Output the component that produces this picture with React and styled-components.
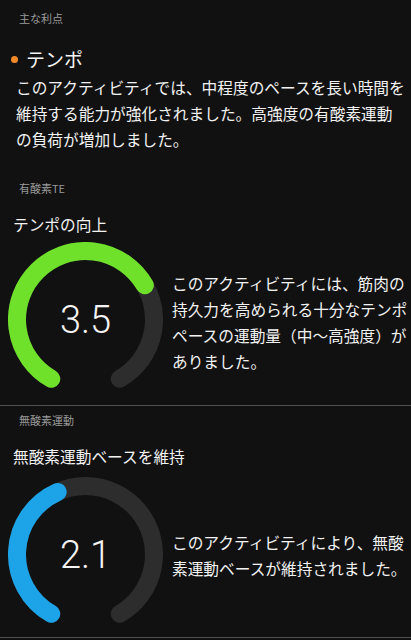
import styled, { createGlobalStyle } from 'styled-components';

const GlobalStyle = createGlobalStyle`
  html, body {
    margin: 0;
    padding: 0;
    background: #111111;
  }
  body {
    font-family: "Noto Sans CJK JP", "Noto Sans", sans-serif;
    color: #f2f2f2;
  }
`;

const polar = (cx, cy, r, deg) => {
  const a = (deg * Math.PI) / 180;
  return [cx + r * Math.sin(a), cy - r * Math.cos(a)];
};

const arcPath = (cx, cy, r, from, to) => {
  const [x1, y1] = polar(cx, cy, r, from);
  const [x2, y2] = polar(cx, cy, r, to);
  const large = to - from > 180 ? 1 : 0;
  return `M ${x1} ${y1} A ${r} ${r} 0 ${large} 1 ${x2} ${y2}`;
};

const Gauge = ({ value, color }) => {
  const size = 155;
  const c = size / 2;
  const r = 68.5;
  const start = 210;
  const sweep = 300;
  const end = start + (sweep * value) / 5;
  return (
    <GaugeBox>
      <svg width={size} height={size} viewBox={`0 0 ${size} ${size}`}>
        <path
          d={arcPath(c, c, r, start, start + sweep)}
          stroke="#2d2d2d"
          strokeWidth="18"
          strokeLinecap="round"
          fill="none"
        />
        <path
          d={arcPath(c, c, r, start, end)}
          stroke={color}
          strokeWidth="18"
          strokeLinecap="round"
          fill="none"
        />
      </svg>
      <GaugeValue>{value.toFixed(1)}</GaugeValue>
    </GaugeBox>
  );
};

const App = () => {
  return (
    <Page>
      <GlobalStyle />
      <Section $pad="10px 0 27px">
        <Label>主な利点</Label>
        <Headline>
          <Dot />
          テンポ
        </Headline>
        <Body>
          このアクティビティでは、中程度のペースを長い時間を
          <br />
          維持する能力が強化されました。高強度の有酸素運動
          <br />
          の負荷が増加しました。
        </Body>
      </Section>

      <Section $pad="0 0 8px" $divider>
        <Label>有酸素TE</Label>
        <Title>テンポの向上</Title>
        <GaugeRow $top="4px">
          <Gauge value={3.5} color="#6fe12b" />
          <Description $shift="6px">
            このアクティビティには、筋肉の
            <br />
            持久力を高められる十分なテンポ
            <br />
            ペースの運動量（中～高強度）が
            <br />
            ありました。
          </Description>
        </GaugeRow>
      </Section>

      <Section $pad="6px 0 5px" $divider>
        <Label>無酸素運動</Label>
        <Title>無酸素運動ベースを維持</Title>
        <GaugeRow $top="7px">
          <Gauge value={2.1} color="#1da4e8" />
          <Description $shift="3px">
            このアクティビティにより、無酸
            <br />
            素運動ベースが維持されました。
          </Description>
        </GaugeRow>
      </Section>
    </Page>
  );
};

export default App;

const Page = styled.div`
  width: 411px;
  min-height: 640px;
  background: #111111;
  overflow: hidden;
`;

const Section = styled.section`
  padding: ${(p) => p.$pad};
  border-bottom: ${(p) => (p.$divider ? '1px solid #505050' : 'none')};
`;

const Label = styled.div`
  padding-left: 19px;
  font-size: 11px;
  line-height: 16px;
  color: #9a9a9a;
`;

const Headline = styled.div`
  display: flex;
  align-items: center;
  margin-top: 20px;
  padding-left: 11px;
  font-size: 19px;
  line-height: 26px;
  color: #f4f4f4;
`;

const Dot = styled.span`
  width: 7px;
  height: 7px;
  border-radius: 50%;
  background: #f28a2a;
  margin-right: 8px;
`;

const Body = styled.p`
  margin: 3px 0 0;
  padding-left: 16px;
  font-size: 15.7px;
  line-height: 26px;
  white-space: nowrap;
  color: #f2f2f2;
`;

const Title = styled.div`
  margin-top: 16px;
  padding-left: 13px;
  font-size: 15.7px;
  line-height: 26px;
  color: #f2f2f2;
`;

const GaugeRow = styled.div`
  display: flex;
  align-items: center;
  gap: 9px;
  margin-top: ${(p) => p.$top};
  padding-left: 8px;
`;

const GaugeBox = styled.div`
  position: relative;
  width: 155px;
  height: 155px;
  flex-shrink: 0;

  svg {
    display: block;
  }
`;

const GaugeValue = styled.div`
  position: absolute;
  inset: 0;
  display: flex;
  align-items: center;
  justify-content: center;
  font-family: Roboto, "Liberation Sans", sans-serif;
  font-weight: 300;
  font-size: 38px;
  color: #f4f4f4;
`;

const Description = styled.p`
  margin: ${(p) => p.$shift} 0 0;
  font-size: 15.7px;
  line-height: 26px;
  white-space: nowrap;
  color: #f2f2f2;
`;
